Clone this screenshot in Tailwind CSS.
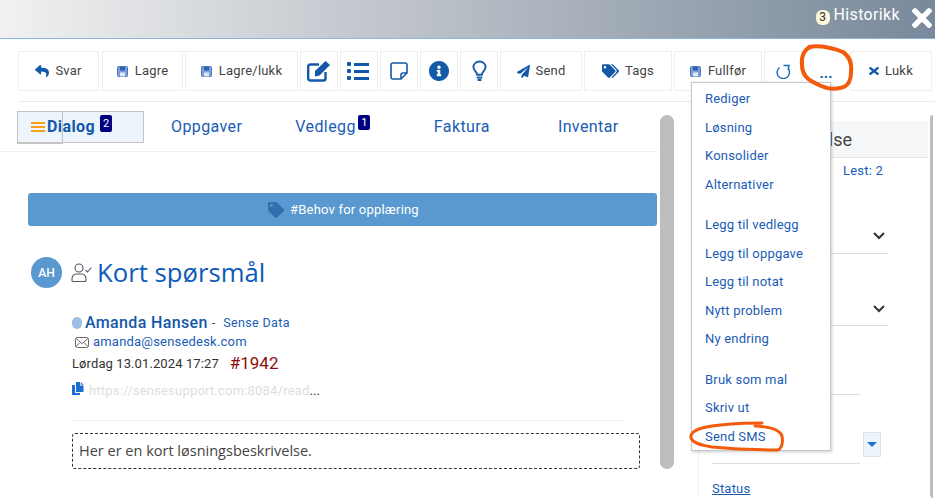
<!DOCTYPE html>
<html lang="en">
<head>
<meta charset="UTF-8">
<title>Historikk</title>
<script src="https://cdn.jsdelivr.net/npm/@tailwindcss/browser@4"></script>
</head>
<body class="bg-white">
<div class="relative w-[935px] h-[498px] overflow-hidden bg-white font-['Roboto',sans-serif] text-[13px] text-[#444]">

  <!-- Header -->
  <header class="h-[39px] flex justify-end items-start border-b border-b-[#8ab4e0] bg-gradient-to-r from-[#f1f1f1] via-[#b6bcc4] to-[#78899b] pr-[3px]">
    <span class="mt-[10px] w-[14px] h-[15px] rounded-[6px] bg-[#fdf8dc] text-[#333] text-[12px] leading-[15px] text-center">3</span>
    <span class="ml-[4px] mt-[5px] text-[16px] leading-[20px] text-white tracking-[0.35px]">Historikk</span>
    <svg class="ml-[12px] mt-[8px] w-[20px] h-[20px]" viewBox="0 80 352 352" preserveAspectRatio="none" fill="#fff"><path d="M242.72 256l100.07-100.07c12.28-12.28 12.28-32.19 0-44.48l-22.24-22.24c-12.28-12.28-32.19-12.28-44.48 0L176 189.28 75.93 89.21c-12.28-12.28-32.19-12.28-44.48 0L9.21 111.45c-12.28 12.28-12.28 32.19 0 44.48L109.28 256 9.21 356.07c-12.28 12.28-12.28 32.19 0 44.48l22.24 22.24c12.28 12.28 32.2 12.28 44.48 0L176 322.72l100.07 100.07c12.28 12.28 32.2 12.28 44.48 0l22.24-22.24c12.28-12.28 12.28-32.19 0-44.48L242.72 256z"/></svg>
  </header>

  <!-- Toolbar -->
  <div class="ml-[18px] mt-[12px] h-[51px] border-b border-b-[#eaeaea] flex gap-[2px] items-start">
    <button class="w-[81px] mr-[1px] h-[40px] border border-[#eeeeee] flex items-center justify-center gap-[6px] tracking-[0.2px]">
      <svg class="w-[14px] h-[14px]" viewBox="0 0 512 512" fill="#1458a8"><path d="M8.309 189.836L184.313 37.851C199.719 24.546 224 35.347 224 56.015v80.053c160.629 1.839 288 34.032 288 186.258 0 61.441-39.581 122.309-83.333 154.132-13.653 9.931-33.111-2.533-28.077-18.631 45.344-145.012-21.507-183.51-176.59-185.742V360c0 20.7-24.3 31.453-39.687 18.164l-176.004-152c-11.071-9.562-11.086-26.753 0-36.328z"/></svg>Svar</button>
    <button class="w-[81px] h-[40px] border border-[#eeeeee] flex items-center justify-center gap-[7px] tracking-[0.2px]">
      <svg class="w-[11px] h-[11px]" viewBox="0 0 11 11"><rect x="0.5" y="0.5" width="10" height="10" rx="1" fill="#7f9fd6" stroke="#4a78bd"/><rect x="3" y="1" width="5" height="3.5" fill="#2f62ad"/><rect x="3" y="6.500" width="5" height="4" fill="#dfe8f5"/></svg>Lagre</button>
    <button class="w-[113px] h-[40px] border border-[#eeeeee] flex items-center justify-center gap-[7px] tracking-[0.2px]">
      <svg class="w-[11px] h-[11px]" viewBox="0 0 11 11"><rect x="0.5" y="0.5" width="10" height="10" rx="1" fill="#7f9fd6" stroke="#4a78bd"/><rect x="3" y="1" width="5" height="3.5" fill="#2f62ad"/><rect x="3" y="6.500" width="5" height="4" fill="#dfe8f5"/></svg>Lagre/lukk</button>
    <button class="w-[38px] h-[40px] border border-[#eeeeee] flex items-center justify-center">
      <svg class="w-[24px] h-[22px]" viewBox="0 0 24 22"><path d="M18.500 12v6.500a2 2 0 0 1-2 2H3.200a2 2 0 0 1-2-2V6.500a2 2 0 0 1 2-2H12" fill="none" stroke="#1458a8" stroke-width="2.400"/><path d="M8 11L18.500 1l4.500 4L12.500 15.500 8 16.500z" fill="#1458a8"/></svg></button>
    <button class="w-[38px] h-[40px] border border-[#eeeeee] flex flex-col justify-center gap-[3px] pl-[6px]">
      <span class="flex gap-[3px] items-center"><i class="block w-[4px] h-[4px] bg-[#1458a8] rounded-[1px]"></i><i class="block w-[15px] h-[3px] bg-[#1458a8]"></i></span>
      <span class="flex gap-[3px] items-center"><i class="block w-[4px] h-[4px] bg-[#1458a8] rounded-[1px]"></i><i class="block w-[15px] h-[3px] bg-[#1458a8]"></i></span>
      <span class="flex gap-[3px] items-center"><i class="block w-[4px] h-[4px] bg-[#1458a8] rounded-[1px]"></i><i class="block w-[15px] h-[3px] bg-[#1458a8]"></i></span></button>
    <button class="w-[38px] h-[40px] border border-[#eeeeee] flex items-center justify-center">
      <svg class="w-[18px] h-[18px]" viewBox="0 0 18 18" fill="none" stroke="#1458a8" stroke-width="1.600"><path d="M11 17H3a2 2 0 0 1-2-2V3a2 2 0 0 1 2-2h12a2 2 0 0 1 2 2v8z"/><path d="M17 11h-4a2 2 0 0 0-2 2v4"/></svg></button>
    <button class="w-[38px] h-[40px] border border-[#eeeeee] flex items-center justify-center">
      <svg class="w-[20px] h-[20px]" viewBox="8 8 496 496" fill="#1458a8"><path d="M256 8C119.043 8 8 119.083 8 256c0 136.997 111.043 248 248 248s248-111.003 248-248C504 119.083 392.957 8 256 8zm0 110c23.196 0 42 18.804 42 42s-18.804 42-42 42-42-18.804-42-42 18.804-42 42-42zm56 254c0 6.627-5.373 12-12 12h-88c-6.627 0-12-5.373-12-12v-24c0-6.627 5.373-12 12-12h12v-64h-12c-6.627 0-12-5.373-12-12v-24c0-6.627 5.373-12 12-12h64c6.627 0 12 5.373 12 12v100h12c6.627 0 12 5.373 12 12v24z"/></svg></button>
    <button class="w-[38px] h-[40px] border border-[#eeeeee] flex items-center justify-center">
      <svg class="w-[15px] h-[22px]" viewBox="0 0 16 22" fill="none" stroke="#1458a8" stroke-width="2"><path d="M5.500 15c0-3-4-4.500-4-8.200a6.500 6 0 0 1 13 0c0 3.700-4 5.200-4 8.200z"/><path d="M5 18h6" stroke-width="2"/><path d="M6 20.500h4" stroke-width="2.400"/></svg></button>
    <button class="w-[82px] h-[40px] border border-[#eeeeee] flex items-center justify-center gap-[6px] tracking-[0.2px]">
      <svg class="w-[13px] h-[13px]" viewBox="0 0 512 512" fill="#1458a8"><path d="M476 3.2L12.5 270.600c-18.100 10.400-15.800 35.600 2.200 43.200L121 358.400l287.300-253.200c5.500-4.900 13.300 2.600 8.600 8.300L176 407v80.500c0 23.600 28.500 32.900 42.500 15.800L282 426l124.600 52.200c14.200 6 30.400-2.900 33-18.200l72-432C515 7.800 493.300-6.800 476 3.200z"/></svg>Send</button>
    <button class="w-[88px] h-[40px] border border-[#eeeeee] flex items-center justify-center gap-[6px] tracking-[0.2px]">
      <svg class="w-[17px] h-[14px]" viewBox="0 0 640 512" fill="#1458a8"><path d="M497.941 225.941L286.059 14.059A48 48 0 0 0 252.118 0H48C21.490 0 0 21.490 0 48v204.118a48 48 0 0 0 14.059 33.941l211.882 211.882c18.744 18.745 49.136 18.746 67.882 0l204.118-204.118c18.745-18.745 18.745-49.137 0-67.882zM112 160c-26.510 0-48-21.490-48-48s21.490-48 48-48 48 21.490 48 48-21.490 48-48 48zm513.941 133.823L421.823 497.941c-18.745 18.745-49.137 18.745-67.882 0l-.36-.36L527.640 323.522c16.999-16.999 26.360-39.600 26.360-63.640s-9.362-46.641-26.360-63.640L331.397 0h48.721a48 48 0 0 1 33.941 14.059l211.882 211.882c18.745 18.745 18.745 49.137 0 67.882z"/></svg>Tags</button>
    <button class="w-[88px] h-[40px] border border-[#eeeeee] flex items-center justify-center gap-[7px] tracking-[0.2px]">
      <svg class="w-[11px] h-[11px]" viewBox="0 0 11 11"><rect x="0.5" y="0.5" width="10" height="10" rx="1" fill="#7f9fd6" stroke="#4a78bd"/><rect x="3" y="1" width="5" height="3.5" fill="#2f62ad"/><rect x="3" y="6.500" width="5" height="4" fill="#dfe8f5"/></svg>Fullfør</button>
    <button class="w-[38px] h-[40px] border border-[#eeeeee] flex items-center justify-center">
      <svg class="w-[15px] h-[15px]" viewBox="0 0 15 15" fill="none" stroke="#1b6ac0" stroke-width="1.400"><path d="M3.500 3.500A6.200 6.200 0 1 0 12.500 5"/><path d="M7.500 1.500h5.500l-1 4.500"/></svg></button>
    <button class="w-[44px] h-[40px] flex items-end justify-center pb-[12px] text-[#1458a8] text-[15px] leading-[12px] font-bold">...</button>
    <button class="w-[82px] h-[40px] border border-[#eeeeee] flex items-center justify-center gap-[6px] tracking-[0.2px]">
      <svg class="w-[10px] h-[8px]" viewBox="0 80 352 352" preserveAspectRatio="none" fill="#1458a8"><path d="M242.72 256l100.070-100.070c12.280-12.280 12.280-32.190 0-44.480l-22.240-22.240c-12.280-12.280-32.190-12.280-44.480 0L176 189.280 75.930 89.210c-12.280-12.280-32.190-12.280-44.480 0L9.210 111.450c-12.280 12.280-12.280 32.190 0 44.480L109.280 256 9.210 356.070c-12.280 12.280-12.280 32.190 0 44.480l22.240 22.240c12.280 12.280 32.200 12.280 44.480 0L176 322.720l100.070 100.070c12.280 12.280 32.200 12.280 44.480 0l22.240-22.240c12.280-12.280 12.280-32.190 0-44.480L242.720 256z"/></svg>Lukk</button>
  </div>

  <!-- Main area -->
  <div class="flex h-[396px]">
    <!-- Left column -->
    <div class="w-[657px] shrink-0">
      <nav class="h-[50px] border-b border-b-[#eeeeee] flex items-start pt-[9px] pl-[17px] text-[#1a5cb5] text-[16px] leading-[22px] tracking-[0.4px]">
        <div class="relative w-[127px] h-[32px] bg-[#edf4fc] border border-[#c4c4c4] flex items-center pl-[13px]">
          <span class="absolute left-[-1px] top-[-1px] w-[46px] h-[33px] border border-[#c4c4c4]"></span>
          <span class="flex flex-col gap-[2px] w-[14px]"><i class="block h-[2px] bg-[#f5a316]"></i><i class="block h-[2px] bg-[#f5a316]"></i><i class="block h-[2px] bg-[#f5a316]"></i></span>
          <b class="ml-[2px] font-bold text-[#1458a8]">Dialog</b>
          <span class="absolute left-[82px] top-[3px] w-[12px] h-[17px] bg-[#000080] text-white text-[11px] leading-[17px] text-center tracking-normal rounded-[2px]">2</span>
        </div>
        <span class="ml-[27px] mt-[5px]">Oppgaver</span>
        <span class="relative ml-[53px] mt-[5px]">Vedlegg<i class="absolute left-[63px] top-[-1px] w-[12px] h-[15px] bg-[#000080] text-white text-[11px] leading-[15px] text-center not-italic tracking-normal rounded-[2px]">1</i></span>
        <span class="ml-[78px] mt-[5px]">Faktura</span>
        <span class="ml-[68px] mt-[5px]">Inventar</span>
      </nav>

      <div class="ml-[28px] mt-[41px] w-[629px] h-[33px] rounded-[3px] bg-[#5a98d0] flex items-center justify-center gap-[6px] pl-[2px] text-white tracking-[0.2px]">
        <svg class="w-[16px] h-[16px]" viewBox="0 0 512 512" fill="#2f6fae"><path d="M497.941 225.941L286.059 14.059A48 48 0 0 0 252.118 0H48C21.490 0 0 21.490 0 48v204.118a48 48 0 0 0 14.059 33.941l211.882 211.882c18.744 18.745 49.136 18.746 67.882 0l204.118-204.118c18.745-18.745 18.745-49.137 0-67.882zM112 160c-26.510 0-48-21.490-48-48s21.490-48 48-48 48 21.490 48 48-21.490 48-48 48z"/></svg>
        #Behov for opplæring
      </div>

      <div class="ml-[31px] mt-[31px] flex items-center h-[31px]">
        <span class="w-[31px] h-[31px] rounded-full bg-[#5a98d0] text-white text-[12px] font-medium flex items-center justify-center">AH</span>
        <svg class="ml-[9px] w-[21px] h-[21px]" viewBox="0 0 21 21" fill="none" stroke="#55566a" stroke-width="1.100"><circle cx="8" cy="6" r="4"/><path d="M1 17c0-3 2-5 4-5h6c2 0 4 2 4 5v1.500a1 1 0 0 1-1 1H2a1 1 0 0 1-1-1z"/><path d="M14.500 8l2 2 4-4.500"/></svg>
        <h1 class="ml-[5px] font-['Open_Sans',sans-serif] text-[25.700px] leading-[31px] text-[#0d5ab8]">Kort spørsmål</h1>
      </div>

      <div class="ml-[72px] mt-[26px]">
        <div class="flex items-center h-[18px]">
          <span class="w-[10px] h-[12px] rounded-full bg-[#9cc0e4]"></span>
          <b class="ml-[3px] text-[16px] font-medium text-[#1458a8] tracking-[0.35px]">Amanda Hansen</b>
          <span class="ml-[4px]">-</span>
          <span class="ml-[8px] text-[12.500px] text-[#1a5cb5] tracking-[0.35px]">Sense Data</span>
        </div>
        <div class="flex items-center h-[18px] mt-[1px]">
          <svg class="ml-[3px] w-[14px] h-[11px]" viewBox="0 0 14 11" fill="none" stroke="#666" stroke-width="1"><rect x="0.500" y="0.500" width="13" height="10" rx="2"/><path d="M1 1.500l6 5 6-5M1 9.500l4-4M13 9.500l-4-4"/></svg>
          <span class="ml-[4px] text-[#1a5cb5] tracking-[0.2px]">amanda@sensedesk.com</span>
        </div>
        <div class="flex items-center h-[24px] mt-[1px]">
          <span class="text-[#333] tracking-[0.1px]">Lørdag 13.01.2024 17:27</span>
          <span class="ml-[11px] text-[17px] text-[#8b0d0d]">#1942</span>
        </div>
        <div class="flex items-center h-[18px] mt-[6px]">
          <svg class="w-[12px] h-[13px] -mt-[5px]" viewBox="0 0 12 13" fill="#1b6fd0"><path d="M4 0h4v3.500h3.500V10H4z"/><path d="M8.800 0L11.500 2.800H8.800z"/><path d="M0 3h3v8h5v2H0z"/></svg>
          <span class="ml-[5px] text-[#dedede] tracking-[0.2px]">https://sensesupport.com:8084/read</span><span class="text-[#333]">...</span>
        </div>
        <div class="mt-[20px] w-[552px] border-t border-t-[#eeeeee]"></div>
        <div class="mt-[12px] w-[568px] h-[36px] border border-dashed border-[#333] rounded-[3px] flex items-center pl-[6px] font-['Open_Sans',sans-serif] text-[14.500px] text-[#444]">Her er en kort løsningsbeskrivelse.</div>
      </div>
    </div>

    <!-- Scrollbar -->
    <div class="ml-[3px] mt-[13px] w-[14px] h-[354px] rounded-[7px] bg-[#bdbdbd] shrink-0"></div>

    <!-- Right panel -->
    <aside class="ml-[24px] mt-[20px] w-[234px] shrink-0 border-l border-l-[#eeeeee] border-t border-t-[#eeeeee] pl-[13px]">
      <div class="-ml-[13px] mr-[4px] h-[35px] bg-[#f6f7f9] border-b border-b-[#e6e6e6] text-[18px] text-[#444] leading-[33px] text-right pr-[76px]">lse</div>
      <p class="mt-[5px] ml-[131px] text-[#1a5cb5] h-[16px] leading-[16px] tracking-[0.2px]">Lest: 2</p>
      <div class="mt-[27px] w-[176px] h-[48px] border-b border-b-[#dcdcdc] flex justify-end items-start pr-[3px] pt-[26px]">
        <svg class="w-[12px] h-[8px]" viewBox="0 0 12 8" fill="none" stroke="#333" stroke-width="2"><path d="M1 1l5 5 5-5"/></svg>
      </div>
      <div class="mt-[24px] w-[176px] h-[48px] border-b border-b-[#dcdcdc] flex justify-end items-start pr-[3px] pt-[27px]">
        <svg class="w-[12px] h-[8px]" viewBox="0 0 12 8" fill="none" stroke="#333" stroke-width="2"><path d="M1 1l5 5 5-5"/></svg>
      </div>
      <div class="w-[148px] h-[69px] border-b border-b-[#dcdcdc]"></div>
      <div class="w-[148px] h-[69px] border-b border-b-[#dcdcdc] relative">
        <span class="absolute left-[151px] top-[37px] w-[18px] h-[25px] bg-[#edf4fc] border border-[#e2e2e2] flex items-center justify-center"><i class="block w-0 h-0 border-x-[5px] border-x-transparent border-t-[5px] border-t-[#1b6fd0]"></i></span>
      </div>
      <a class="block mt-[17px] h-[15px] leading-[15px] underline text-[#1a5cb5] tracking-[0.2px]">Status</a>
    </aside>
    <div class="ml-[-2px] mt-[13px] w-[3px] h-[383px] bg-[#bdbdbd] rounded-l-[3px] shrink-0"></div>
  </div>

  <!-- Dropdown menu -->
  <div class="absolute left-[691px] top-[82px] w-[140px] h-[369px] bg-white border border-[#c8c8c8] shadow-[1px_1px_3px_rgba(0,0,0,0.2)] pl-[13px] text-[#1a5cb5] tracking-[0.2px] leading-[28.500px]">
    <div class="mt-[2px]">Rediger</div>
    <div>Løsning</div>
    <div>Konsolider</div>
    <div>Alternativer</div>
    <div class="mt-[12.200px]">Legg til vedlegg</div>
    <div>Legg til oppgave</div>
    <div>Legg til notat</div>
    <div>Nytt problem</div>
    <div>Ny endring</div>
    <div class="mt-[12.300px]">Bruk som mal</div>
    <div>Skriv ut</div>
    <div>Send SMS</div>
  </div>

  <!-- Hand-drawn marks -->
  <svg class="absolute left-0 top-0 w-[935px] h-[498px] pointer-events-none" viewBox="0 0 935 498" fill="none" stroke="#f25a0c" stroke-width="4" stroke-linecap="round">
    <path d="M809 47C820 45 835 49 843 52C850 57 852 65 851 72C851 80 848 87 840 88C832 90 822 87 815 83C808 80 802 74 802 65C801 57 804 49 811 47"/>
    <path d="M762 423C740 423 715 425 702 428C694 430 690 434 691 438C693 443 700 445 712 447C735 449 760 450 778 450C782 448 783 442 782 436C780 430 772 427 755 426" stroke-width="3"/>
  </svg>
</div>
</body>
</html>
